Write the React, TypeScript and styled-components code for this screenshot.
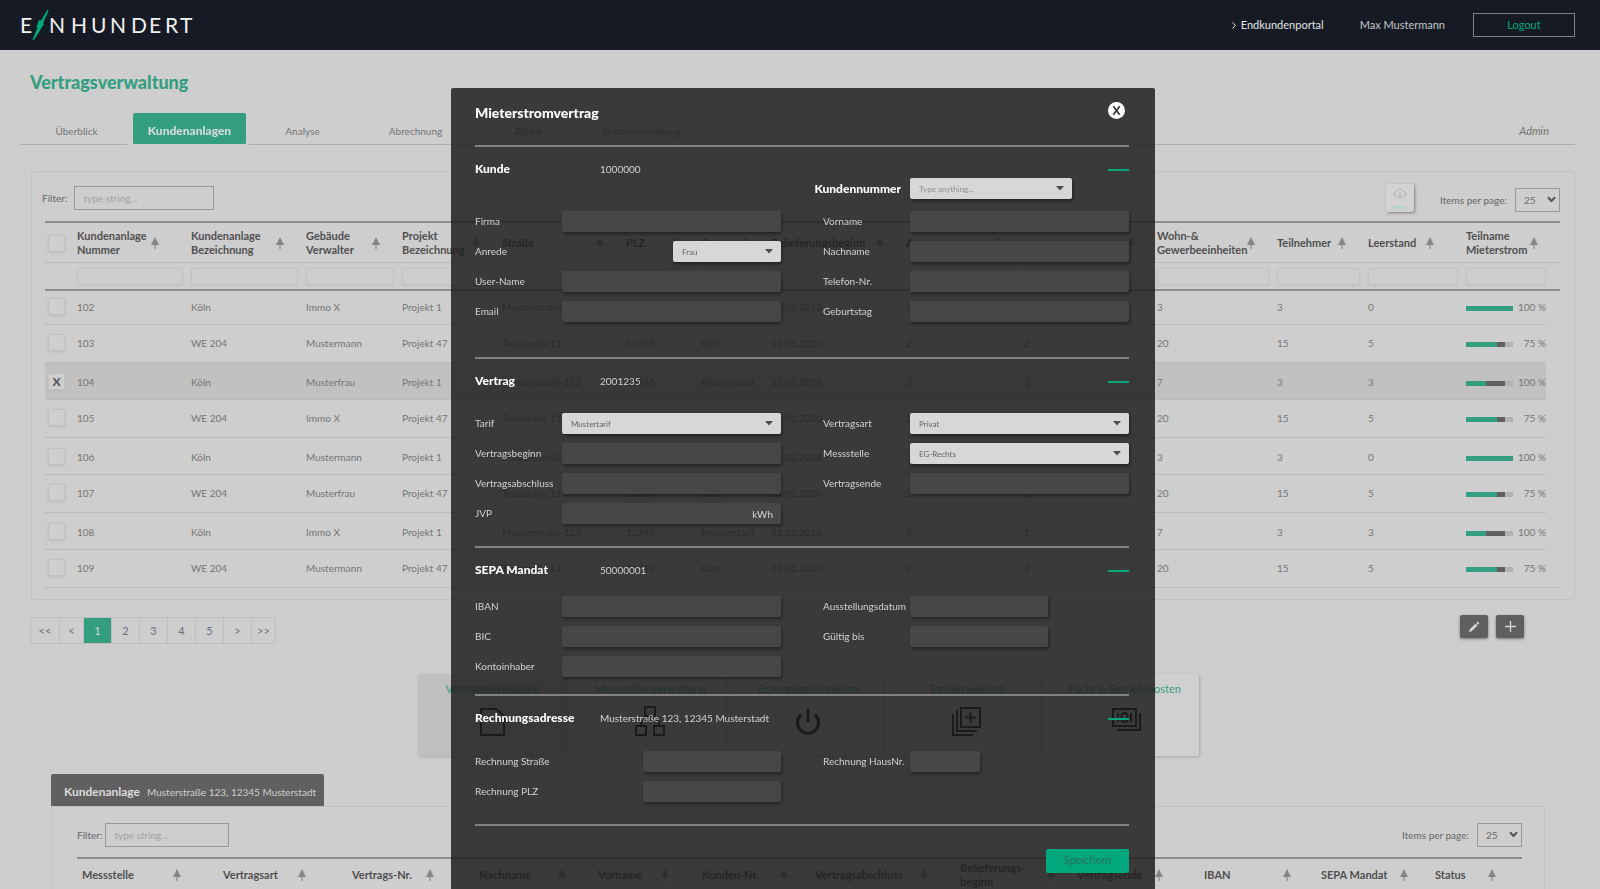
import React from "react";
import styled, { createGlobalStyle, css } from "styled-components";

const c = {
  page: "#cecece",
  night: "#151a24",
  green: "#349e80",
  brightGreen: "#00a87c",
  text: "#757575",
  strong: "#505050",
  line: "#bababa",
  rule: "#8c8c8c",
  slate: "#606060",
};

const GlobalStyle = createGlobalStyle`
  * { box-sizing: border-box; }
  body {
    margin: 0;
    background: ${c.page};
    color: ${c.text};
    font-family: Lato, "Liberation Sans", sans-serif;
    font-size: 10px;
    line-height: 14px;
  }
  button, input, select { font: inherit; color: inherit; margin: 0; }
  button { cursor: pointer; padding: 0; border: 0; background: none; }
`;

const Shell = styled.div`
  height: 100vh;
  overflow: hidden;
`;

/* ---------- top bar ---------- */

const TopBar = styled.header`
  height: 50px;
  padding: 0 25px 0 21px;
  display: flex;
  align-items: center;
  justify-content: space-between;
  background: ${c.night};
`;

const Wordmark = styled.svg`
  display: block;
  font-size: 21px;
  font-weight: 400;
  fill: #f2f2f2;
`;

const Account = styled.div`
  display: flex;
  align-items: center;
  font-size: 11px;
  color: #c4c6c9;
`;

const PortalLink = styled.a`
  display: flex;
  align-items: center;
  gap: 5px;
  margin-right: 36px;
  color: #e4e5e6;
  text-decoration: none;
`;

const Logout = styled.button`
  width: 102px;
  height: 24px;
  margin-left: 28px;
  border: 1px solid #80838a;
  color: ${c.brightGreen};
`;

/* ---------- page ---------- */

const PageTitle = styled.h1`
  margin: 20px 0 0 30px;
  font-size: 18px;
  font-weight: 900;
  line-height: 24px;
  color: ${c.green};
`;

const Tabs = styled.nav`
  display: flex;
  margin: 19px 25px 0 20px;
  height: 32px;
`;

const Tab = styled.button<{ $active?: boolean }>`
  width: 113px;
  padding-top: 4px;
  border-bottom: 1px solid #adadad;
  ${(p) =>
    p.$active &&
    css`
      z-index: 1;
      background: ${c.green};
      color: #d6dcd9;
      font-size: 12px;
      font-weight: 900;
      border-bottom-color: ${c.page};
      border-radius: 2px;
      box-shadow: -6px 0 0 ${c.page}, 3px 0 0 ${c.page};
    `}
`;

const TabsRest = styled.div`
  flex: 1;
  display: flex;
  align-items: center;
  justify-content: flex-end;
  padding: 5px 26px 0 0;
  border-bottom: 1px solid #adadad;
  font-size: 11px;
  font-style: italic;
`;

const Panel = styled.section`
  margin: 26px 25px 0 31px;
  padding: 0 16px 11px 13px;
  border: 1px solid #c2c2c2;
  border-radius: 3px;
`;

const Toolbar = styled.div<{ $inset?: boolean }>`
  display: flex;
  align-items: center;
  height: 49px;
  margin: 0 -2px 0 -3px;
  padding-top: 3px;
  ${(p) => p.$inset && css`height: 50px; margin: 0; padding-top: 5px;`}
`;

const FilterLabel = styled.label<{ $gap: number; $width: number }>`
  display: flex;
  align-items: center;
  gap: ${(p) => p.$gap}px;
  margin-right: auto;
  color: #666;
  input {
    width: ${(p) => p.$width}px;
    height: 24px;
    padding: 0 8px;
    border: 1px solid #999;
    background: transparent;
  }
  input::placeholder { color: #a2a2a2; opacity: 1; }
`;

const CsvButton = styled.button`
  display: flex;
  justify-content: center;
  width: 28px;
  height: 28px;
  margin-right: 26px;
  overflow: hidden;
  border-radius: 2px;
  background: #d2d2d2;
  box-shadow: 1px 1px 3px #808080;
`;

const PageSize = styled.label<{ $low?: boolean }>`
  display: flex;
  align-items: center;
  gap: 8px;
  padding-top: ${(p) => (p.$low ? 3 : 0)}px;
  color: #666;
`;

const SelectBox = styled.span`
  position: relative;
  display: inline-flex;
  svg {
    position: absolute;
    top: 0;
    bottom: 0;
    margin: auto 0;
    pointer-events: none;
  }
`;

const SizeSelect = styled.select`
  appearance: none;
  width: 45px;
  height: 24px;
  padding: 0 8px;
  border: 1px solid #999;
  border-radius: 0;
  background: transparent;
  & + svg { right: 4px; }
`;

const Table = styled.table`
  width: 100%;
  table-layout: fixed;
  border-collapse: separate;
  border-spacing: 0;
  border-top: 2px solid ${c.rule};
  th, td { padding: 0; text-align: left; white-space: nowrap; }
`;

const HeadRow = styled.tr<{ $indent?: number }>`
  height: ${(p) => (p.$indent ? 33 : 40)}px;
  th {
    border-bottom: 1px solid ${c.line};
    font-size: 11px;
    color: ${c.strong};
    padding-top: ${(p) => (p.$indent ? 0 : 1)}px;
    padding-left: ${(p) => p.$indent ?? 0}px;
  }
`;

const HeadCell = styled.span<{ $pad: number }>`
  display: flex;
  align-items: center;
  justify-content: space-between;
  padding-right: ${(p) => p.$pad}px;
  white-space: pre-line;
  svg { flex: none; }
`;

const FilterRow = styled.tr`
  height: 28px;
  td { border-bottom: 2px solid ${c.rule}; }
  input {
    display: block;
    width: calc(100% - 8px);
    height: 17px;
    border: 1px solid #c2c2c2;
    border-radius: 2px;
    background: transparent;
    box-shadow: 0 1px 2px #c2c2c2;
  }
  td:nth-last-child(2) input { width: 100%; }
`;

const Row = styled.tr<{ $selected?: boolean }>`
  height: 38px;
  &:first-child { height: 34px; }
  &:nth-child(odd):not(:first-child) { height: 37px; }
  td {
    padding-bottom: 2px;
    border-bottom: 1px solid ${c.line};
    ${(p) => p.$selected && css`background: #c1c1c1;`}
  }
  &:nth-child(odd):not(:first-child) td { padding: 1px 0 0; }
  &:not(:last-child) td:last-child {
    border-bottom: 0;
    background: none;
  }
`;

const Check = styled.input`
  appearance: none;
  display: grid;
  place-items: center;
  width: 17px;
  height: 17px;
  margin: 0 0 0 3px;
  border: 1px solid #c0c0c0;
  border-radius: 2px;
  background: #cfcfcf;
  box-shadow: 0 1px 3px #bcbcbc;
  &:checked::after {
    content: "X";
    font-size: 12px;
    font-weight: 900;
    color: #555;
  }
`;

const Share = styled.div`
  display: flex;
  align-items: center;
  justify-content: space-between;
`;

const Meter = styled.div`
  display: flex;
  width: 47px;
  height: 5px;
  margin-top: 4px;
  background: #b2b2b2;
`;

const MeterPart = styled.i<{ $dark?: boolean }>`
  background: ${(p) => (p.$dark ? c.slate : c.green)};
`;

const BelowTable = styled.div`
  display: flex;
  justify-content: space-between;
  align-items: flex-start;
  margin: 15px 76px 0 30px;
`;

const Pager = styled.nav`
  display: flex;
  margin-top: 2px;
  border: 1px solid #bfbfbf;
  border-radius: 2px;
`;

const PageButton = styled.button<{ $active?: boolean }>`
  width: 28px;
  height: 25px;
  font-size: 11px;
  color: #6b7280;
  & + & { border-left: 1px solid #bfbfbf; }
  &:nth-child(2), &:last-child { width: 24px; }
  ${(p) => p.$active && css`background: ${c.green}; color: #d6dcd9;`}
`;

const Actions = styled.div`
  display: flex;
  gap: 8px;
`;

const ActionButton = styled.button`
  display: grid;
  place-items: center;
  width: 28px;
  height: 23px;
  border-radius: 2px;
  background: #5f5f5f;
  box-shadow: 0 1px 3px #777;
`;

const Cards = styled.div`
  display: flex;
  justify-content: center;
  gap: 9px;
  margin-top: 30px;
  padding-left: 17px;
`;

const Card = styled.button<{ $active?: boolean }>`
  display: flex;
  flex-direction: column;
  align-items: center;
  gap: 9px;
  width: 149px;
  height: 82px;
  padding-top: 8px;
  border-radius: 2px;
  background: ${(p) => (p.$active ? "#c0c0c0" : "#d0d0d0")};
  box-shadow: 1px 1px 3px #a6a6a6;
  font-size: 11px;
  color: ${c.green};
`;

const DetailTag = styled.h2`
  display: flex;
  width: fit-content;
  align-items: center;
  gap: 7px;
  height: 32px;
  margin: 18px 0 0 51px;
  padding: 3px 8px 0 13px;
  border-radius: 2px 2px 0 0;
  background: ${c.slate};
  color: #cfcfcf;
  font-size: 10px;
  font-weight: 400;
  b { font-size: 12px; color: #dcdcdc; }
`;

const DetailPanel = styled.section`
  margin: 0 55px 0 51px;
  padding: 0 22px 40px 25px;
  border: 1px solid #c2c2c2;
`;

/* ---------- dialog ---------- */

const Overlay = styled.div`
  position: fixed;
  inset: 88px 0 0 0;
  padding-left: 6px;
  display: flex;
  justify-content: center;
`;

const Dialog = styled.div`
  width: 704px;
  padding: 0 26px 0 24px;
  border-radius: 2px 2px 0 0;
  background: rgba(28, 28, 28, 0.83);
  color: #d2d2d2;
`;

const DialogHead = styled.div`
  display: flex;
  justify-content: space-between;
  align-items: center;
  height: 59px;
  padding-bottom: 8px;
  border-bottom: 2px solid #828282;
  h2 { margin: 0; font-size: 14px; font-weight: 900; line-height: 20px; color: #fff; }
`;

const Close = styled.button`
  display: grid;
  margin: 0 4px 4px 0;
`;

const Section = styled.section<{ $after: number }>`
  padding-bottom: ${(p) => p.$after}px;
  border-bottom: 2px solid #828282;
`;

const SectionHead = styled.div`
  display: flex;
  align-items: center;
  height: 30px;
  padding-top: 13px;
  h3 { width: 125px; margin: 0; font-size: 12px; font-weight: 900; color: #fff; }
`;

const Collapse = styled.button`
  width: 21px;
  height: 2px;
  margin: 2px 0 0 auto;
  background: ${c.brightGreen};
`;

const Columns = styled.div<{ $before: number }>`
  display: grid;
  grid-template-columns: 1fr 1fr;
  column-gap: 42px;
  margin-top: ${(p) => p.$before}px;
`;

const Stack = styled.div`
  display: flex;
  flex-direction: column;
  gap: 9px;
`;

const FieldRow = styled.label<{ $end?: boolean; $bold?: boolean }>`
  display: grid;
  grid-template-columns: 87px 1fr;
  align-items: center;
  justify-items: ${(p) => (p.$end ? "end" : "start")};
  height: 21px;
  > span:first-child {
    justify-self: start;
    padding-bottom: 2px;
    white-space: nowrap;
  }
  ${(p) =>
    p.$bold &&
    css`
      margin-bottom: 3px;
      font-size: 12px;
      font-weight: 900;
      color: #fff;
      > span:first-child { justify-self: end; padding: 0 9px 0 0; }
    `}
`;

const fieldShape = css<{ $w?: number }>`
  width: ${(p) => (p.$w ? `${p.$w}px` : "100%")};
  height: 21px;
  border: 0;
  border-radius: 2px;
  box-shadow: 1px 2px 3px rgba(0, 0, 0, 0.4);
`;

const TextInput = styled.input<{ $w?: number }>`
  ${fieldShape}
  background: #464846;
  padding: 0 8px;
`;

const FieldBox = styled(SelectBox)<{ $w?: number }>`
  width: ${(p) => (p.$w ? `${p.$w}px` : "100%")};
  > svg { right: 8px; }
`;

const Unit = styled.span`
  position: absolute;
  right: 8px;
  top: 4px;
`;

const DropDown = styled.select<{ $muted?: boolean }>`
  ${fieldShape}
  appearance: none;
  padding: 0 9px;
  background: #d7d7d7;
  color: ${(p) => (p.$muted ? "#8e8e8e" : "#636363")};
  font-size: 8px;
  font-weight: 400;
`;

const DialogFoot = styled.div`
  display: flex;
  justify-content: flex-end;
  padding-top: 23px;
`;

const Save = styled.button`
  width: 83px;
  height: 24px;
  padding-bottom: 3px;
  border-radius: 2px;
  background: ${c.brightGreen};
  color: #2d6f5c;
  font-size: 11px;
`;

/* ---------- icons ---------- */

const SortIcon = () => (
  <svg width="8" height="12" viewBox="0 0 8 12" fill="#868686">
    <path d="M4 0 8 8H4.600V12H3.400V8H0Z" />
  </svg>
);

const Chevron = () => (
  <svg width="9" height="7" viewBox="0 0 9 7" fill="none" stroke="#555" strokeWidth="2">
    <path d="M1 1.300 4.500 5 8 1.300" />
  </svg>
);

const Caret = () => (
  <svg width="8" height="5" viewBox="0 0 8 5" fill="#4c4c4c">
    <path d="M0 0H8L4 4.500Z" />
  </svg>
);

const Logo = () => (
  <Wordmark width="175" height="34" viewBox="0 0 175 34" role="img" aria-label="Einhundert">
    <text y="25" x="-1">E</text>
    <text y="25" x="28 50 70 89 110 128 144 159">NHUNDERT</text>
    <path
      fill={c.brightGreen}
      d="M26.300 2 27.700 2.400 22 15.300 23.200 15.800 13 32 11.500 31.500 16.600 19.500 15.400 19.200 18.100 12 20.200 12.600Z"
    />
  </Wordmark>
);

const cardIcon = { width: 32, height: 32, viewBox: "0 0 32 32", fill: "none", stroke: c.night, strokeWidth: 2 };

const FileIcon = () => (
  <svg {...cardIcon}>
    <path d="M4 4H19L27 11V30H4Z" />
  </svg>
);
const NetworkIcon = () => (
  <svg {...cardIcon}>
    <path d="M10 2H20V11H10ZM1 21H11V30H1ZM19 21H29V30H19ZM15 11V16M6 21V16H24V21" />
  </svg>
);
const PowerIcon = () => (
  <svg {...cardIcon} strokeWidth={3}>
    <path d="M15 4V17M8.500 9.500A10.500 10.500 0 1 0 21.500 9.500" />
  </svg>
);
const StackPlusIcon = () => (
  <svg {...cardIcon}>
    <path d="M10 3H29V22H10ZM19.500 7V18M14 12.500H25M6 5V26H26M2 9V30H22" />
  </svg>
);
const PaymentsIcon = () => (
  <svg {...cardIcon}>
    <path d="M4 4H27V21H4ZM31 8V25H8M9 8V17M22 8V17" />
    <rect x="12.500" y="8" width="6" height="9" rx="3" />
  </svg>
);

/* ---------- data ---------- */

type Column = { label: string; width: number; pad?: number };

const unitColumns: Column[] = [
  { label: "Kundenanlage\nNummer", width: 114, pad: 32 },
  { label: "Kundenanlage\nBezeichnung", width: 115 },
  { label: "Gebäude\nVerwalter", width: 96 },
  { label: "Projekt\nBezeichnung", width: 100 },
  { label: "Straße", width: 124 },
  { label: "PLZ", width: 75 },
  { label: "Ort", width: 70 },
  { label: "Belieferungsbeginn", width: 135 },
  { label: "Art", width: 118 },
  { label: "", width: 133 },
  { label: "Wohn-&\nGewerbeeinheiten", width: 120 },
  { label: "Teilnehmer", width: 91 },
  { label: "Leerstand", width: 98, pad: 32 },
  { label: "Teilname\nMieterstrom", width: 80, pad: 8 },
];

const contractColumns: Column[] = [
  { label: "Messstelle", width: 141, pad: 37 },
  { label: "Vertragsart", width: 129, pad: 41 },
  { label: "Vertrags-Nr.", width: 127, pad: 40 },
  { label: "Nachname", width: 119, pad: 27 },
  { label: "Vorname", width: 104, pad: 28 },
  { label: "Kunden-Nr.", width: 113, pad: 22 },
  { label: "Vertragsabschluss", width: 145, pad: 27 },
  { label: "Belieferungs-\nbeginn", width: 117, pad: 17 },
  { label: "Vertragsende", width: 127, pad: 36 },
  { label: "IBAN", width: 117, pad: 25 },
  { label: "SEPA Mandat", width: 114, pad: 22 },
  { label: "Status", width: 92, pad: 26 },
];

const cityA = ["Musterstraße 123", "12345", "Musterstadt", "31.02.2018", "3", "1"];
const cityB = ["Teststraße 11", "56789", "Köln", "01.01.2020", "2", "2"];

const units = [
  { cells: ["102", "Köln", "Immo X", "Projekt 1", ...cityA, "3", "3", "0"], parts: [100, 0], share: "100 %" },
  { cells: ["103", "WE 204", "Mustermann", "Projekt 47", ...cityB, "20", "15", "5"], parts: [65, 17], share: "75 %" },
  { cells: ["104", "Köln", "Musterfrau", "Projekt 1", ...cityA, "7", "3", "3"], parts: [43, 39], share: "100 %", selected: true },
  { cells: ["105", "WE 204", "Immo X", "Projekt 47", ...cityB, "20", "15", "5"], parts: [65, 17], share: "75 %" },
  { cells: ["106", "Köln", "Mustermann", "Projekt 1", ...cityA, "3", "3", "0"], parts: [100, 0], share: "100 %" },
  { cells: ["107", "WE 204", "Musterfrau", "Projekt 47", ...cityB, "20", "15", "5"], parts: [65, 17], share: "75 %" },
  { cells: ["108", "Köln", "Immo X", "Projekt 1", ...cityA, "7", "3", "3"], parts: [43, 39], share: "100 %" },
  { cells: ["109", "WE 204", "Mustermann", "Projekt 47", ...cityB, "20", "15", "5"], parts: [65, 17], share: "75 %" },
];

/* ---------- parts ---------- */

const HeadLabel = ({ col }: { col: Column }) => (
  <HeadCell $pad={col.pad ?? 22}>
    <span>{col.label}</span>
    <SortIcon />
  </HeadCell>
);

const ItemsPerPage = ({ low }: { low?: boolean }) => (
  <PageSize $low={low}>
    Items per page:
    <SelectBox>
      <SizeSelect defaultValue="25">
        <option>25</option>
        <option>50</option>
      </SizeSelect>
      <Chevron />
    </SelectBox>
  </PageSize>
);

type FieldProps = { label: string; w?: number; end?: boolean };

const Field = ({ label, w, end, unit }: FieldProps & { unit?: string }) => (
  <FieldRow $end={end}>
    <span>{label}</span>
    <FieldBox $w={w}>
      <TextInput type="text" />
      {unit && <Unit>{unit}</Unit>}
    </FieldBox>
  </FieldRow>
);

const Choice = ({ label, w, end, value, bold }: FieldProps & { value: string; bold?: boolean }) => (
  <FieldRow $end={end} $bold={bold}>
    <span>{label}</span>
    <FieldBox $w={w}>
      <DropDown $muted={bold} defaultValue={value}>
        <option>{value}</option>
      </DropDown>
      <Caret />
    </FieldBox>
  </FieldRow>
);

const Heading = ({ title, info }: { title: string; info: string }) => (
  <SectionHead>
    <h3>{title}</h3>
    <span>{info}</span>
    <Collapse aria-label={`${title} einklappen`} />
  </SectionHead>
);

const UnitTable = () => (
  <Table>
    <colgroup>
      <col width={32} />
      {unitColumns.map((col, i) => (
        <col key={i} width={col.width} />
      ))}
      <col width={14} />
    </colgroup>
    <thead>
      <HeadRow>
        <th>
          <Check type="checkbox" aria-label="Alle auswählen" />
        </th>
        {unitColumns.map((col, i) => (
          <th key={i}>
            <HeadLabel col={col} />
          </th>
        ))}
        <th />
      </HeadRow>
      <FilterRow>
        <td />
        {unitColumns.map((col, i) => (
          <td key={i}>
            <input type="text" aria-label={`Filter ${col.label}`} />
          </td>
        ))}
        <td />
      </FilterRow>
    </thead>
    <tbody>
      {units.map((u) => (
        <Row key={u.cells[0]} $selected={u.selected}>
          <td>
            <Check type="checkbox" defaultChecked={u.selected} aria-label={u.cells[0]} />
          </td>
          {u.cells.map((cell, i) => (
            <td key={i}>{cell}</td>
          ))}
          <td>
            <Share>
              <Meter>
                <MeterPart style={{ width: `${u.parts[0]}%` }} />
                <MeterPart $dark style={{ width: `${u.parts[1]}%` }} />
              </Meter>
              {u.share}
            </Share>
          </td>
          <td />
        </Row>
      ))}
    </tbody>
  </Table>
);

const ContractDialog = () => (
  <Overlay>
    <Dialog role="dialog" aria-label="Mieterstromvertrag">
      <DialogHead>
        <h2>Mieterstromvertrag</h2>
        <Close aria-label="Schließen">
          <svg width="17" height="17" viewBox="0 0 17 17">
            <circle cx="8.500" cy="8.500" r="8.500" fill="#fff" />
            <path d="M5.300 4.300 11.700 12.700M11.700 4.300 5.300 12.700" stroke="#3a3a3a" strokeWidth="1.800" />
          </svg>
        </Close>
      </DialogHead>

      <Section $after={35}>
        <Heading title="Kunde" info="1000000" />
        <Columns $before={1}>
          <span />
          <Stack>
            <Choice bold label="Kundennummer" value="Type anything..." w={162} />
          </Stack>
        </Columns>
        <Columns $before={9}>
          <Stack>
            <Field label="Firma" />
            <Choice label="Anrede" value="Frau" w={108} end />
            <Field label="User-Name" />
            <Field label="Email" />
          </Stack>
          <Stack>
            <Field label="Vorname" />
            <Field label="Nachname" />
            <Field label="Telefon-Nr." />
            <Field label="Geburtstag" />
          </Stack>
        </Columns>
      </Section>

      <Section $after={22}>
        <Heading title="Vertrag" info="2001235" />
        <Columns $before={24}>
          <Stack>
            <Choice label="Tarif" value="Mustertarif" />
            <Field label="Vertragsbeginn" />
            <Field label="Vertragsabschluss" />
            <Field label="JVP" unit="kWh" />
          </Stack>
          <Stack>
            <Choice label="Vertragsart" value="Privat" />
            <Choice label="Messstelle" value="EG-Rechts" />
            <Field label="Vertragsende" />
          </Stack>
        </Columns>
      </Section>

      <Section $after={17}>
        <Heading title="SEPA Mandat" info="50000001" />
        <Columns $before={18}>
          <Stack>
            <Field label="IBAN" />
            <Field label="BIC" />
            <Field label="Kontoinhaber" />
          </Stack>
          <Stack>
            <Field label="Ausstellungsdatum" w={138} />
            <Field label="Gültig bis" w={138} />
          </Stack>
        </Columns>
      </Section>

      <Section $after={22}>
        <Heading title="Rechnungsadresse" info="Musterstraße 123, 12345 Musterstadt" />
        <Columns $before={25}>
          <Stack>
            <Field label="Rechnung Straße" w={138} end />
            <Field label="Rechnung PLZ" w={138} end />
          </Stack>
          <Stack>
            <Field label="Rechnung HausNr." w={70} />
          </Stack>
        </Columns>
      </Section>

      <DialogFoot>
        <Save>Speichern</Save>
      </DialogFoot>
    </Dialog>
  </Overlay>
);

export default function App() {
  return (
    <Shell>
      <GlobalStyle />
      <TopBar>
        <Logo />
        <Account>
          <PortalLink href="#portal">
            <svg width="4" height="7" viewBox="0 0 4 7" fill="none" stroke="#e4e5e6">
              <path d="M.5 .5 3.300 3.500 .5 6.500" />
            </svg>
            Endkundenportal
          </PortalLink>
          Max Mustermann
          <Logout>Logout</Logout>
        </Account>
      </TopBar>

      <main>
        <PageTitle>Vertragsverwaltung</PageTitle>
        <Tabs>
          <Tab>Überblick</Tab>
          <Tab $active>Kundenanlagen</Tab>
          <Tab>Analyse</Tab>
          <Tab>Abrechnung</Tab>
          <Tab>Zähler</Tab>
          <Tab>Nutzereinstellung</Tab>
          <TabsRest>Admin</TabsRest>
        </Tabs>

        <Panel>
          <Toolbar>
            <FilterLabel $gap={7} $width={140}>
              Filter:
              <input type="text" placeholder="type string..." />
            </FilterLabel>
            <CsvButton aria-label="Als CSV laden">
              <svg width="28" height="28" viewBox="0 0 28 28" fill="none" stroke="#b4b4b4">
                <path d="M11 12.500H10.500A2.500 2.500 0 0 1 10.500 7.500 3.500 3.500 0 0 1 17.300 7.500 2.500 2.500 0 0 1 17.500 12.500H17M14 8.500V14M12 12.200 14 14.200 16 12.200" />
                <path
                  stroke="#9fd3c3"
                  strokeWidth="1.500"
                  d="M11 23.500C9 21.500 7.500 23 7.500 25M15.500 23C13.500 22 12 23 13 25M17 22.500 18 25M20.500 22.500 19.500 25"
                />
              </svg>
            </CsvButton>
            <ItemsPerPage low />
          </Toolbar>
          <UnitTable />
        </Panel>

        <BelowTable>
          <Pager>
            {["<<", "<", "1", "2", "3", "4", "5", ">", ">>"].map((p) => (
              <PageButton key={p} $active={p === "1"}>
                {p}
              </PageButton>
            ))}
          </Pager>
          <Actions>
            <ActionButton aria-label="Bearbeiten">
              <svg width="12" height="12" viewBox="0 0 12 12" fill="#d6d6d6">
                <path d="M1 11 1.800 8.300 7.600 2.500 9.500 4.400 3.700 10.200ZM8.300 1.800 9.500 .6 11.400 2.500 10.200 3.700Z" />
              </svg>
            </ActionButton>
            <ActionButton aria-label="Hinzufügen">
              <svg width="11" height="11" viewBox="0 0 11 11" stroke="#d6d6d6" strokeWidth="1.400">
                <path d="M5.500 0V11M0 5.500H11" />
              </svg>
            </ActionButton>
          </Actions>
        </BelowTable>

        <Cards>
          <Card $active>
            Vertragsverwaltung
            <FileIcon />
          </Card>
          <Card>
            Messstellenverwaltung
            <NetworkIcon />
          </Card>
          <Card>
            Erzeugungseinheiten
            <PowerIcon />
          </Card>
          <Card>
            Tarifverwaltung
            <StackPlusIcon />
          </Card>
          <Card>
            Pacht &amp; Betriebskosten
            <PaymentsIcon />
          </Card>
        </Cards>

        <DetailTag>
          <b>Kundenanlage</b> Musterstraße 123, 12345 Musterstadt
        </DetailTag>
        <DetailPanel>
          <Toolbar $inset>
            <FilterLabel $gap={3} $width={124}>
              Filter:
              <input type="text" placeholder="type string..." />
            </FilterLabel>
            <ItemsPerPage />
          </Toolbar>
          <Table>
            <colgroup>
              {contractColumns.map((col) => (
                <col key={col.label} width={col.width} />
              ))}
            </colgroup>
            <thead>
              <HeadRow $indent={5}>
                {contractColumns.map((col) => (
                  <th key={col.label}>
                    <HeadLabel col={col} />
                  </th>
                ))}
              </HeadRow>
            </thead>
          </Table>
        </DetailPanel>
      </main>

      <ContractDialog />
    </Shell>
  );
}
